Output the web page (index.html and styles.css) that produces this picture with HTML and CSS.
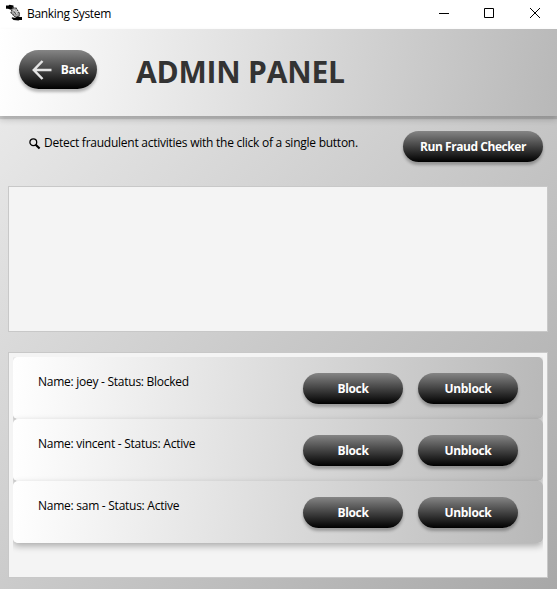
FILE: index.html
```html
<!DOCTYPE html>
<html lang="en">
<head>
<meta charset="utf-8">
<title>Banking System</title>
<link rel="stylesheet" href="styles.css">
</head>
<body>
<div class="titlebar">
  <svg class="app-icon" width="18" height="18" viewBox="0 0 18 18">
    <path d="M1 1.500h2.500l1-.8 4 .8v2.800L6 5.800 3 4.800H1z" fill="#000"/>
    <path d="M17 16h-2.500l-1 .4-5-.4-2-2 1-.7 2.500.8 2.500-2.200 2.500 1.200H17z" fill="#000"/>
    <path d="M7.500 3.800l3.500.2 3.500 5.500-.5 3-4 .5-4-4.500z" fill="#aaa" stroke="#333" stroke-width="1.100" stroke-dasharray="2 .7"/>
    <path d="M8.500 6.300l2 1M9.500 9.500l2.500-.5M11.500 6.500l1 1.500" stroke="#eee" fill="none"/>
    <path d="M9 7.500l2 3" stroke="#444" fill="none"/>
  </svg>
  <span class="window-title">Banking System</span>
  <div class="window-controls">
    <svg width="46" height="27" viewBox="0 0 46 27"><path d="M18 13.500h10" stroke="#000"/></svg>
    <svg width="46" height="27" viewBox="0 0 46 27"><path d="M17.500 8.500h9v9h-9z" stroke="#000" fill="none"/></svg>
    <svg width="44" height="27" viewBox="0 0 44 27"><path d="M17 8l10 10M27 8L17 18" stroke="#000"/></svg>
  </div>
</div>
<div class="scene">
  <div class="header">
    <button class="btn back">
      <svg width="20" height="20" viewBox="0 0 20 20"><path d="M19.500 10H2M10.500 1L1.800 10l8.700 9" fill="none" stroke="#e4e4e4" stroke-width="2.500"/></svg>
      <span class="back-label">Back</span>
    </button>
    <h1 class="heading">ADMIN PANEL</h1>
  </div>
  <div class="toolbar">
    <div class="hint">
      <svg class="search" width="12" height="12" viewBox="0 0 12 12"><circle cx="4.300" cy="4.200" r="3.400" fill="none" stroke="#000" stroke-width="1.300"/><path d="M6.700 6.700l3.900 3.900" stroke="#000" stroke-width="2.100"/></svg>
      <span class="hint-text">Detect fraudulent activities with the click of a single button.</span>
    </div>
    <button class="btn run"><span class="run-label">Run Fraud Checker</span></button>
  </div>
  <div class="panel results"></div>
  <div class="panel users">
    <div class="list">
      <div class="row"><span class="name">Name: joey - Status: Blocked</span><button class="btn act"><span class="act-label">Block</span></button><button class="btn act"><span class="act-label">Unblock</span></button></div>
      <div class="row"><span class="name">Name: vincent - Status: Active</span><button class="btn act"><span class="act-label">Block</span></button><button class="btn act"><span class="act-label">Unblock</span></button></div>
      <div class="row"><span class="name">Name: sam - Status: Active</span><button class="btn act"><span class="act-label">Block</span></button><button class="btn act"><span class="act-label">Unblock</span></button></div>
    </div>
  </div>
</div>
</body>
</html>
```
FILE: styles.css
```css
* { box-sizing: border-box; }
body {
  margin: 0;
  width: 557px;
  height: 589px;
  overflow: hidden;
  font: 12px/16px "Open Sans", "Noto Sans", sans-serif;
  color: #000;
}
.titlebar {
  display: flex;
  height: 29px;
  background: #fff;
}
.app-icon { margin: 4px 4px 0 5px; }
.window-title { margin-top: 6px; letter-spacing: -0.33px; white-space: nowrap; }
.window-controls { display: flex; margin-left: auto; }
.scene {
  height: 560px;
  background: linear-gradient(135deg, #eee, #a8a8a8);
}
.header {
  display: flex;
  height: 87px;
  padding: 21px 0 0 19px;
  background: linear-gradient(98.9deg, #fff, #b8b8b8);
  box-shadow: 0 3px 1px rgba(0, 0, 0, 0.12), 0 4px 6px rgba(0, 0, 0, 0.16);
}
.btn {
  display: flex;
  align-items: center;
  justify-content: center;
  flex: none;
  height: 31px;
  padding: 0;
  border: 0;
  border-radius: 16px;
  background: linear-gradient(#858585, #000);
  box-shadow: 0 3px 3px rgba(0, 0, 0, 0.27);
  color: #fff;
  font: bold 12px/16px "Open Sans", "Noto Sans", sans-serif;
  white-space: nowrap;
}
.back { width: 78px; height: 39px; border-radius: 20px; gap: 9px; padding-left: 4px; }
.back-label { letter-spacing: -0.4px; }
.heading {
  margin: 1px 0 0 39px;
  font-size: 30px;
  line-height: 42px;
  letter-spacing: -0.2px;
  color: #333;
  white-space: nowrap;
}
.toolbar {
  display: flex;
  height: 70px;
  padding: 15px 14px 0 29px;
}
.hint { display: flex; padding-top: 4px; }
.search { margin: 3px 3px 0 0; }
.hint-text { letter-spacing: -0.25px; white-space: nowrap; }
.run { width: 140px; margin-left: auto; }
.run-label { letter-spacing: -0.45px; }
.act-label { letter-spacing: -0.35px; }
.panel {
  width: 540px;
  margin-left: 8px;
  border: 1px solid #c8c8c8;
  background: #f4f4f4;
}
.results { height: 146px; }
.users { height: 226px; margin-top: 20px; padding: 4px; }
.list { overflow: hidden; height: 216px; width: 530px; }
.row {
  display: flex;
  height: 62px;
  padding: 16px 25px 0;
  border-radius: 5px;
  background: linear-gradient(96.7deg, #fff, #b8b8b8);
  box-shadow: 0 3px 7px rgba(0, 0, 0, 0.3);
}
.name { width: 265px; padding-top: 1px; white-space: nowrap; letter-spacing: -0.26px; }
.act { width: 100px; }
.act + .act { margin-left: 15px; }
```
